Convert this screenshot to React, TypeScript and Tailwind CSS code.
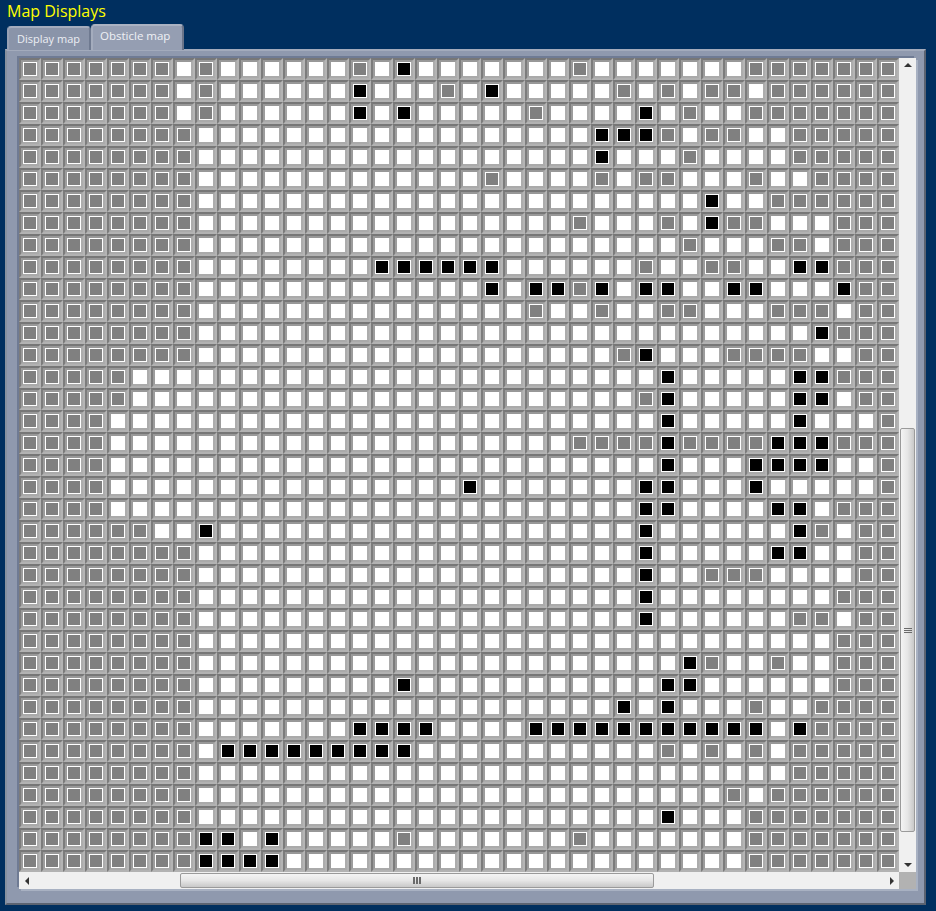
import React from "react";

const ROWS: [string, string][] = [
  ["0-6 8 15 25 33-39", "17"],
  ["0-6 8 19 27 29 31 32 34-39", "15 21"],
  ["0-6 8 23 30 33-39", "15 17 28"],
  ["0-7 29 31 32 35-39", "26 27 28"],
  ["0-7 30 35-39", "26"],
  ["0-7 21 26 28 29 33 36-39", ""],
  ["0-7 34-39", "31"],
  ["0-7 25 29 32 33 37-39", "31"],
  ["0-7 30 34 35 37-39", ""],
  ["0-7 28 31 32 37-39", "16-21 35 36"],
  ["0-7 25 38 39", "21 23 24 26 28 29 32 33 37"],
  ["0-7 23 26 29 30 34-36 38 39", ""],
  ["0-7 37-39", "36"],
  ["0-7 27 32-35 38 39", "28"],
  ["0-4 37-39", "29 35 36"],
  ["0-4 28 38 39", "29 35 36"],
  ["0-3 39", "29 35"],
  ["0-3 25-28 30-33 37-39", "29 34-36"],
  ["0-3 39", "29 33-36"],
  ["0-3 39", "20 28 29 33"],
  ["0-3 37-39", "28 29 34 35"],
  ["0-5 36 38 39", "8 28 35"],
  ["0-7 38 39", "28 34 35"],
  ["0-7 31-33 38 39", "28"],
  ["0-7 37-39", "28"],
  ["0-7 35 36 38 39", "28"],
  ["0-7 37-39", ""],
  ["0-7 31 34 37-39", "30"],
  ["0-7 37-39", "17 29 30"],
  ["0-7 33 36-39", "27 29"],
  ["0-7 36-39", "15-18 23-33 35"],
  ["0-7 29 31 33 35-39", "9-17"],
  ["0-7 35-39", ""],
  ["0-7 32 34-39", ""],
  ["0-7 33-39", "29"],
  ["0-7 17 25 33-39", "8 9 11"],
  ["0-7 33-39", "8-11"],
];

function expand(spec: string): Set<number> {
  const out = new Set<number>();
  spec.split(" ").filter(Boolean).forEach((part) => {
    const [a, b] = part.split("-").map(Number);
    for (let i = a; i <= (b ?? a); i++) out.add(i);
  });
  return out;
}

function Cell({ kind }: { kind: "g" | "b" | "w" }) {
  const inner =
    kind === "w"
      ? "bg-white"
      : kind === "b"
        ? "bg-black border border-white"
        : "bg-[#808080] border border-white";
  return (
    <div className="w-[22px] h-[22px] border-2 border-t-[#777777] border-l-[#7c7c7c] border-r-[#b4b4b4] border-b-[#b2b2b2]">
      <div className="w-[18px] h-[18px] border-2 border-t-[#989898] border-l-[#9c9c9c] border-r-[#acacac] border-b-[#aaaaaa]">
        <div className={`w-[14px] h-[14px] ${inner}`} />
      </div>
    </div>
  );
}

function Grip({ vertical }: { vertical?: boolean }) {
  return (
    <div className={`flex gap-[1px] ${vertical ? "flex-col" : "flex-row"}`}>
      {[0, 1, 2].map((i) => (
        <div key={i} className={`bg-[#6a6a6a] ${vertical ? "w-[8px] h-[1px]" : "w-[2px] h-[7px]"}`} />
      ))}
    </div>
  );
}

function Arrow({ dir }: { dir: "up" | "down" | "left" | "right" }) {
  const points = {
    up: "4,0 8,4 0,4",
    down: "0,0 8,0 4,4",
    left: "4,0 4,8 0,4",
    right: "0,0 4,4 0,8",
  }[dir];
  const size = dir === "up" || dir === "down" ? "w-[8px] h-[4px]" : "w-[4px] h-[8px]";
  const box = dir === "up" || dir === "down" ? "0 0 8 4" : "0 0 4 8";
  return (
    <svg viewBox={box} className={size}>
      <polygon points={points} fill="#333333" />
    </svg>
  );
}

export default function App() {
  return (
    <div
      className="w-[936px] h-[911px] bg-[#002f5f] overflow-hidden flex flex-col"
      style={{ fontFamily: '"Open Sans", "Noto Sans", sans-serif' }}
    >
      <div className="h-[24px] pl-[7px] text-[16px] leading-[22px] text-[#ffff00]">Map Displays</div>

      <div className="h-[26px] pl-[7px] flex items-end relative z-10 -mb-[1px]">
        <div className="w-[84px] h-[24px] bg-[#8a94a9] border-t-2 border-l-2 border-r-2 border-t-[#a4acbd] border-l-[#98a1b4] border-r-[#6f7a90] rounded-t-[4px] pl-[8px] text-[11px] leading-[22px] text-[#eceef4]">
          Display map
        </div>
        <div className="w-[93px] h-[26px] bg-[#959eb2] border-t-2 border-l-2 border-r-2 border-t-[#aab2c2] border-l-[#a4acbd] border-r-[#6a7489] rounded-t-[4px] pl-[7px] text-[11.5px] leading-[20px] text-[#eef0f5]">
          Obsticle map
        </div>
      </div>

      <div className="ml-[5px] w-[921px] h-[856px] bg-[#8f99ae] border-2 border-t-[#a3abbc] border-l-[#87919f] border-r-[#5b6371] border-b-[#5b6371] pt-[7px] pl-[12px] pr-[8px] pb-[14px]">
        <div className="w-[897px] h-[831px] flex flex-col shadow-[-2px_-2px_0_#6f7b94,2px_2px_0_#a8b1c2]">
          <div className="flex h-[814px]">
            <div className="w-[880px] flex flex-col">
              {ROWS.map(([g, b], r) => {
                const grays = expand(g);
                const blacks = expand(b);
                return (
                  <div key={r} className="flex">
                    {Array.from({ length: 40 }, (_, c) => (
                      <Cell key={c} kind={blacks.has(c) ? "b" : grays.has(c) ? "g" : "w"} />
                    ))}
                  </div>
                );
              })}
            </div>
            <div className="w-[17px] bg-[#f0f0f0] flex flex-col items-center justify-between pt-[5px] pb-[5px] relative">
              <Arrow dir="up" />
              <div className="absolute left-[1px] top-[370px] w-[15px] h-[404px] rounded-[2px] border border-[#9a9a9a] bg-gradient-to-r from-[#f4f4f4] via-[#e6e6e6] to-[#c8c8c8] flex items-center justify-center">
                <Grip vertical />
              </div>
              <Arrow dir="down" />
            </div>
          </div>
          <div className="flex h-[17px]">
            <div className="w-[880px] bg-[#f0f0f0] flex items-center justify-between pl-[6px] pr-[5px] relative">
              <Arrow dir="left" />
              <div className="absolute left-[161px] top-[1px] w-[474px] h-[15px] rounded-[2px] border border-[#9a9a9a] bg-gradient-to-b from-[#f4f4f4] via-[#e6e6e6] to-[#c8c8c8] flex items-center justify-center">
                <Grip />
              </div>
              <Arrow dir="right" />
            </div>
            <div className="w-[17px] bg-[#b2b2b2]" />
          </div>
        </div>
      </div>
    </div>
  );
}
